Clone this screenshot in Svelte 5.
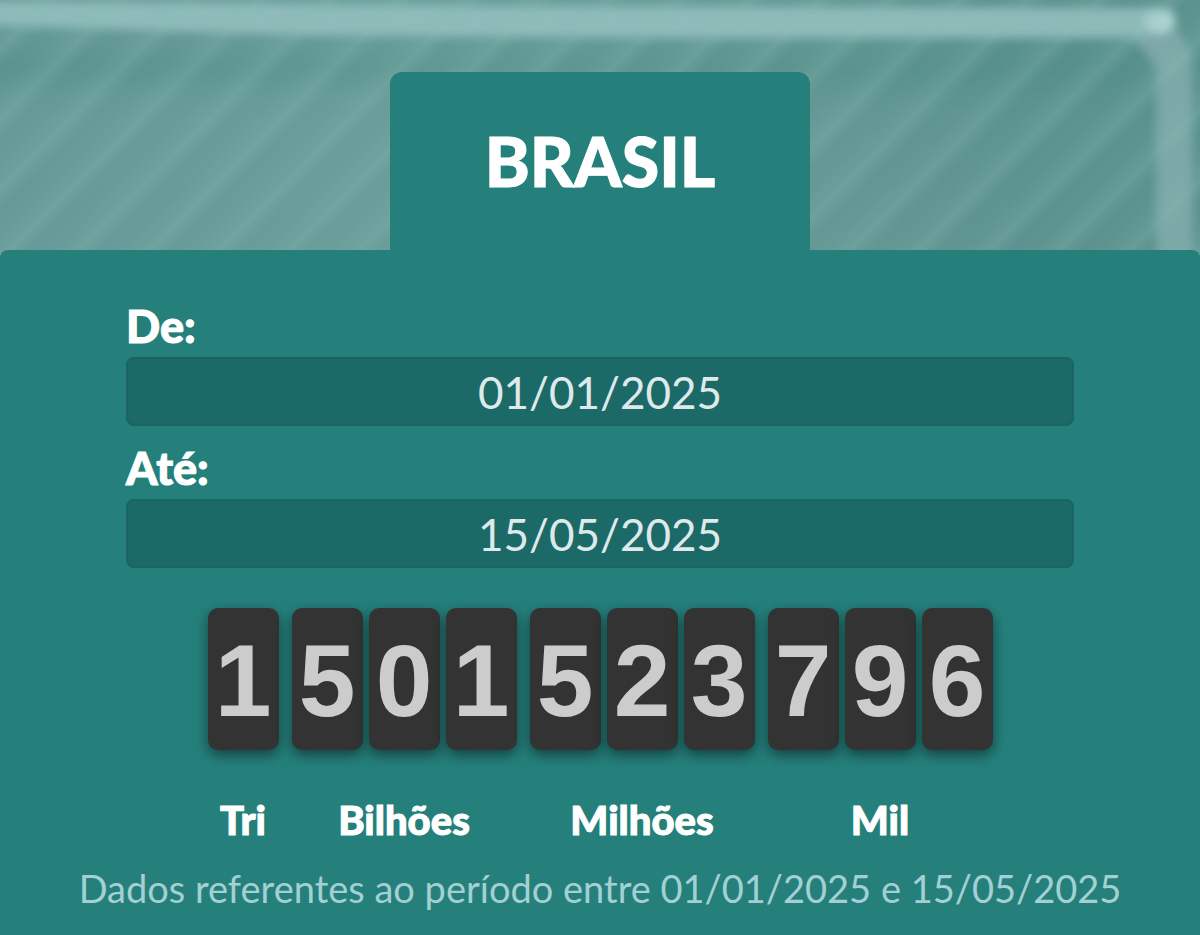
<script>
	let from = $state('01/01/2025');
	let to = $state('15/05/2025');

	const groups = [
		{ label: 'Tri', digits: '1' },
		{ label: 'Bilhões', digits: '501' },
		{ label: 'Milhões', digits: '523' },
		{ label: 'Mil', digits: '796' }
	];
</script>

<main>
	<svg class="backdrop" viewBox="0 0 1200 262" preserveAspectRatio="none" aria-hidden="true">
		<defs>
			<linearGradient id="base" x1="0" y1="0" x2="1" y2="0">
				<stop offset="0" stop-color="#669a98" />
				<stop offset="0.35" stop-color="#6a9e9b" />
				<stop offset="0.7" stop-color="#649895" />
				<stop offset="0.85" stop-color="#5c928f" />
				<stop offset="1" stop-color="#5b928e" />
			</linearGradient>
			<linearGradient
				id="stripe"
				gradientUnits="userSpaceOnUse"
				x1="8"
				y1="-7"
				x2="43"
				y2="28"
				spreadMethod="repeat"
			>
				<stop offset="0" stop-color="#86b8b4" stop-opacity="0" />
				<stop offset="0.3" stop-color="#86b8b4" stop-opacity="0.06" />
				<stop offset="0.55" stop-color="#86b8b4" stop-opacity="0.18" />
				<stop offset="0.7" stop-color="#8abcb8" stop-opacity="0.26" />
				<stop offset="0.85" stop-color="#86b8b4" stop-opacity="0.12" />
				<stop offset="1" stop-color="#86b8b4" stop-opacity="0" />
			</linearGradient>
			<filter id="soft" x="-10%" y="-50%" width="120%" height="200%">
				<feGaussianBlur stdDeviation="5" />
			</filter>
			<filter id="haze" x="-20%" y="-80%" width="140%" height="260%">
				<feGaussianBlur stdDeviation="16" />
			</filter>
		</defs>
		<rect width="1200" height="262" fill="url(#base)" />
		<path d="M-60 46 L400 56 L1150 50 V86 L400 80 L-60 86Z" fill="#4f8c85" opacity="0.6" filter="url(#haze)" />
		<g filter="url(#soft)">
			<path d="M-20 1 L500 6 L1172 8 L1168 38 L700 38 L300 35 L-20 25Z" fill="#94c0be" opacity="0.9" />
			<path d="M1150 30 L1174 26 L1192 52 L1193 280 H1156 V66 L1134 39Z" fill="#81adac" opacity="0.85" />
			<ellipse cx="1160" cy="21" rx="16" ry="12" fill="#b8dbda" opacity="0.8" />
		</g>
		<rect width="1200" height="262" fill="url(#stripe)" />
	</svg>

	<header>
		<h1>BRASIL</h1>
	</header>

	<section class="panel">
		<form>
			<label for="from">De:</label>
			<input id="from" type="text" bind:value={from} />
			<label for="to">Até:</label>
			<input id="to" type="text" bind:value={to} />
		</form>

		<div class="counter">
			{#each groups as group}
				<div class="group">
					<div class="digits">
						{#each group.digits as digit}
							<span class="digit">{digit}</span>
						{/each}
					</div>
					<span class="unit">{group.label}</span>
				</div>
			{/each}
		</div>

		<p>Dados referentes ao período entre {from} e {to}</p>
	</section>
</main>

<style>
	:global(body) {
		margin: 0;
		background: #25807c;
	}

	main {
		position: relative;
		display: flex;
		flex-direction: column;
		min-height: 100vh;
		font-family: Lato, sans-serif;
		color: #fff;
	}

	/* Sits behind the tab and the rounded corners of the panel */
	.backdrop {
		position: absolute;
		top: 0;
		left: 0;
		z-index: -1;
		width: 100%;
		height: 262px;
	}

	header {
		display: flex;
		justify-content: center;
		padding-top: 72px;
	}

	h1 {
		box-sizing: border-box;
		width: 35%;
		min-width: 300px;
		margin: 0;
		padding: 48px 0;
		border-radius: 12px 12px 0 0;
		background: #25807c;
		font-size: 68px;
		font-weight: 900;
		line-height: 82px;
		text-align: center;
	}

	h1,
	label,
	.unit {
		-webkit-text-stroke: 1px #fff;
	}

	.panel {
		flex: 1;
		display: flex;
		flex-direction: column;
		align-items: center;
		padding: 48px 24px 16px;
		border-radius: 8px 8px 0 0;
		background: #25807c;
	}

	form {
		display: flex;
		flex-direction: column;
		width: 100%;
		max-width: 948px;
	}

	label {
		margin-bottom: 3px;
		font-size: 45px;
		font-weight: 900;
		line-height: 56px;
	}

	input {
		box-sizing: border-box;
		width: 100%;
		height: 69px;
		margin: 0 0 14px;
		padding: 0;
		border: 2px solid #186561;
		border-radius: 8px;
		background: #1c6a67;
		color: #dfe9ec;
		font-family: inherit;
		font-size: 44px;
		text-align: center;
	}

	.counter {
		display: flex;
		gap: 13px;
		margin-top: 26px;
	}

	.group {
		display: flex;
		flex-direction: column;
		align-items: center;
		gap: 46px;
	}

	.digits {
		display: flex;
		gap: 6px;
	}

	.digit {
		width: 71px;
		padding-top: 4px;
		border-radius: 10px;
		background: #333;
		box-shadow: 0 5px 14px rgba(0, 0, 0, 0.5);
		color: #ccc;
		font-family: 'Liberation Sans', Arial, sans-serif;
		font-size: 102px;
		font-weight: 700;
		line-height: 138px;
		text-align: center;
	}

	.unit {
		font-size: 40px;
		font-weight: 900;
		line-height: 48px;
	}

	p {
		margin: 20px 0 0;
		color: #a3d0d2;
		font-size: 38px;
		line-height: 48px;
		text-align: center;
	}
</style>
